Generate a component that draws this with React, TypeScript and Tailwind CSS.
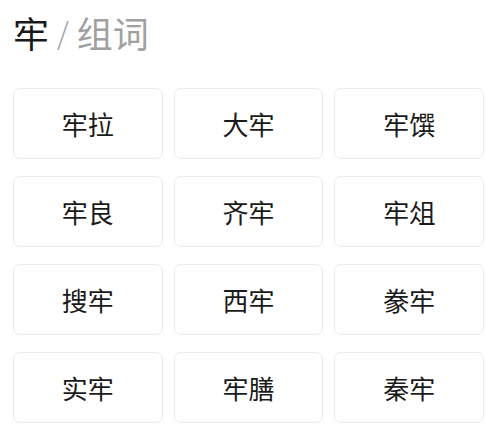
const WORDS = ['牢拉', '大牢', '牢馔', '牢良', '齐牢', '牢俎', '搜牢', '西牢', '豢牢', '实牢', '牢膳', '秦牢'];

export default function App() {
  return (
    <div
      className="w-[500px] h-[428px] bg-white overflow-hidden"
      style={{ fontFamily: '"Noto Sans CJK SC", "Noto Sans", sans-serif' }}
    >
      <div className="px-[13px] pt-[8px]">
        <h1 className="text-[36px] leading-[48px] font-normal flex items-center">
          <span className="text-[#1a1a1a]">牢</span>
          <span className="text-[#a0a0a0] text-[30px] font-light mx-[8px]">/</span>
          <span className="text-[#a0a0a0]">组词</span>
        </h1>
        <div className="mt-[32px] w-[471px] grid grid-cols-3 gap-x-[11px] gap-y-[17px]">
          {WORDS.map(w => (
            <div
              key={w}
              className="h-[71px] flex items-center justify-center rounded-[7px] border border-[#ebebeb] text-[26px] text-[#1a1a1a]"
            >
              {w}
            </div>
          ))}
        </div>
      </div>
    </div>
  );
}
